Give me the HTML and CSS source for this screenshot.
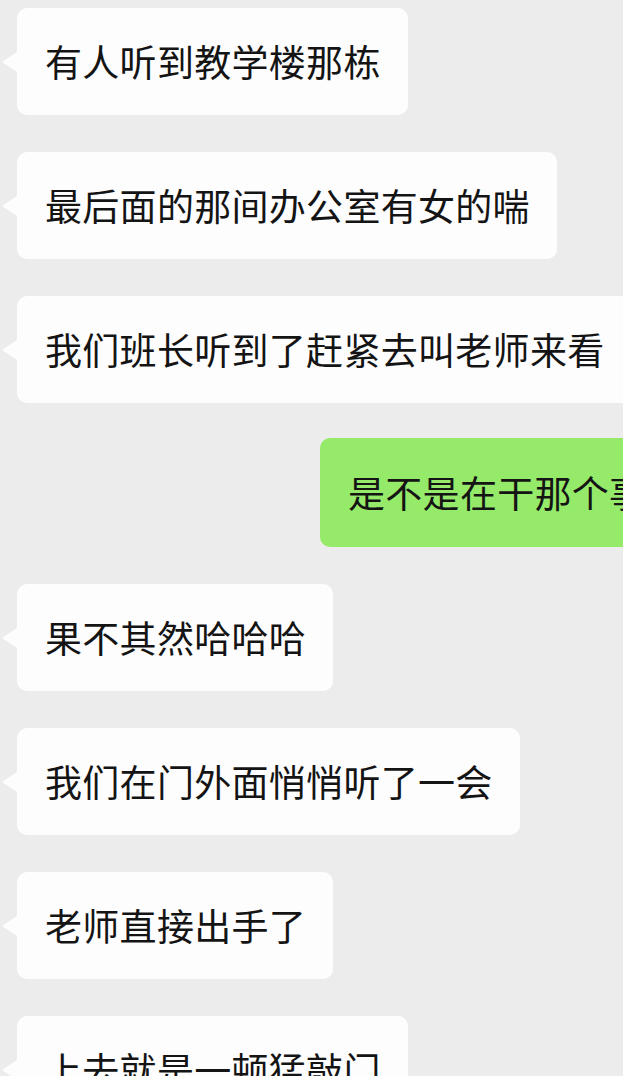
FILE: index.html
```html
<!DOCTYPE html>
<html lang="zh-CN">
<head>
    <meta charset="UTF-8">
    <meta name="viewport" content="width=device-width, initial-scale=1.0">
    <title>聊天记录</title>
    <link rel="stylesheet" href="styles.css">
</head>
<body>
    <div class="chat">
        <div class="row">
            <div class="bubble">有人听到教学楼那栋</div>
        </div>
        <div class="row">
            <div class="bubble">最后面的那间办公室有女的喘</div>
        </div>
        <div class="row">
            <div class="bubble">我们班长听到了赶紧去叫老师来看</div>
        </div>
        <div class="row row-self">
            <div class="bubble bubble-self">是不是在干那个事</div>
        </div>
        <div class="row">
            <div class="bubble">果不其然哈哈哈</div>
        </div>
        <div class="row">
            <div class="bubble">我们在门外面悄悄听了一会</div>
        </div>
        <div class="row">
            <div class="bubble">老师直接出手了</div>
        </div>
        <div class="row">
            <div class="bubble">上去就是一顿猛敲门</div>
        </div>
    </div>
</body>
</html>
```

FILE: styles.css
```css
:root {
    --bg: #ececec;
    --bubble: #fdfdfd;
    --bubble-self: #95ea6a;
    --text: #141414;
}

html, body {
    margin: 0;
    padding: 0;
    overflow: hidden;
}
body {
    width: 623px;
    height: 1076px;
    background-color: var(--bg);
    font-family: "Noto Sans CJK SC", "Noto Sans", sans-serif;
    color: var(--text);
}
.chat {
    display: flex;
    flex-direction: column;
    gap: 37px;
    padding-top: 8px;
}
.row {
    display: flex;
    padding-left: 17px;
}
.row-self {
    padding-left: 320px;
    margin-top: -2px;
}
.bubble {
    position: relative;
    flex-shrink: 0;
    white-space: nowrap;
    background-color: var(--bubble);
    border-radius: 10px;
    padding: 27px 27px 27px 28px;
    font-size: 37px;
    line-height: 53px;
    letter-spacing: 0.3px;
}
.bubble::before {
    content: "";
    position: absolute;
    left: -15px;
    top: 50%;
    margin-top: -10px;
    border-style: solid;
    border-width: 10px 15px 10px 0;
    border-color: transparent var(--bubble) transparent transparent;
}
.bubble-self {
    background-color: var(--bubble-self);
    padding-top: 28px;
    padding-bottom: 28px;
}
.bubble-self::before {
    display: none;
}
```
